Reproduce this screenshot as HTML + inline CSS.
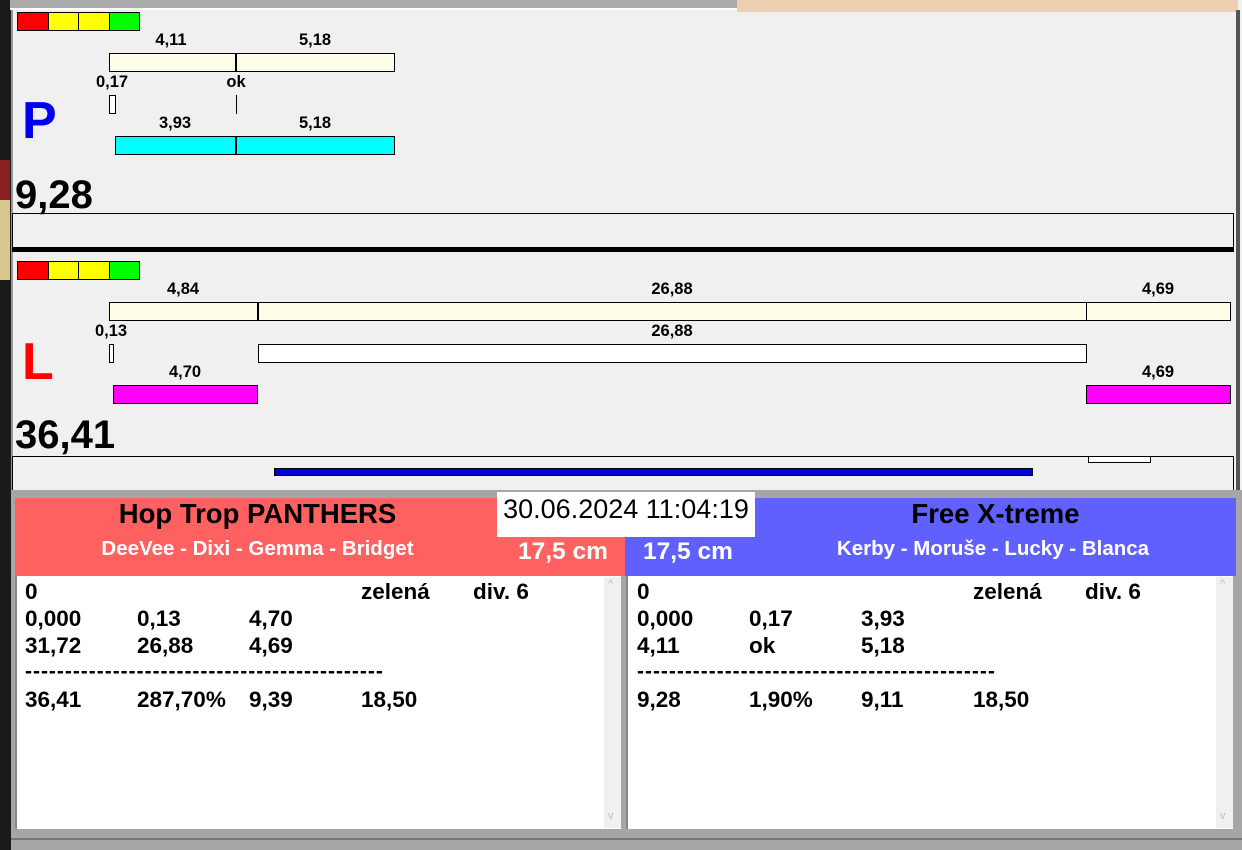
<!DOCTYPE html>
<html><head><meta charset="utf-8"><style>
*{margin:0;padding:0;box-sizing:border-box}
body{width:1242px;height:850px;position:relative;overflow:hidden;background:#f0f0f0;font-family:"Liberation Sans",Arial,sans-serif;}
.a{position:absolute}
.t{position:absolute;font-weight:bold;font-size:16.5px;color:#000;transform:translateX(-50%);white-space:nowrap;line-height:17px}
.bx{position:absolute;border:1px solid #000}
.row{position:absolute;font-weight:bold;font-size:22.5px;line-height:24px;white-space:nowrap}
.row span{position:absolute}
</style></head><body>
<div class="a" style="left:0;top:0;width:11px;height:850px;background:#1a1a1a"></div>
<div class="a" style="left:0;top:200px;width:10px;height:80px;background:#d8c890"></div>
<div class="a" style="left:0;top:160px;width:10px;height:40px;background:#8a2020"></div>
<div class="a" style="left:10px;top:0;width:727px;height:10px;background:#ababab"></div>
<div class="a" style="left:737px;top:0;width:501px;height:12px;background:#efcfb2"></div>
<div class="a" style="left:10px;top:8px;width:727px;height:2px;background:#fff"></div>
<div class="a" style="left:11px;top:10px;width:2px;height:480px;background:#999"></div>
<div class="a" style="left:1236px;top:10px;width:4px;height:482px;background:#555"></div>

<!-- P section -->
<div class="a" style="left:17px;top:12px;width:123px;height:19px;border:1px solid #000;display:flex">
<div style="flex:1;background:#f00;border-right:1px solid #000"></div><div style="flex:1;background:#ff0;border-right:1px solid #000"></div><div style="flex:1;background:#ff0;border-right:1px solid #000"></div><div style="flex:1;background:#0f0"></div></div>
<div class="t" style="left:171px;top:32px">4,11</div>
<div class="t" style="left:315px;top:32px">5,18</div>
<div class="bx" style="left:109px;top:53px;width:286px;height:19px;background:#fefee8"></div>
<div class="a" style="left:235px;top:53px;width:2px;height:19px;background:#000"></div>
<div class="t" style="left:112px;top:74px">0,17</div>
<div class="t" style="left:236px;top:74px">ok</div>
<div class="bx" style="left:109px;top:95px;width:7px;height:19px;background:#fff"></div>
<div class="a" style="left:236px;top:95px;width:1px;height:19px;background:#000"></div>
<div class="t" style="left:175px;top:115px">3,93</div>
<div class="t" style="left:315px;top:115px">5,18</div>
<div class="bx" style="left:115px;top:136px;width:280px;height:19px;background:#0ff"></div>
<div class="a" style="left:235px;top:136px;width:2px;height:19px;background:#000"></div>
<div class="a" style="left:22px;top:92px;font-size:52px;font-weight:bold;color:#0000ee;line-height:58px">P</div>
<div class="a" style="left:15px;top:172px;font-size:40px;font-weight:bold;line-height:46px">9,28</div>
<div class="a" style="left:12px;top:213px;width:1222px;height:36px;border:1px solid #000;border-bottom:none"></div>
<div class="a" style="left:12px;top:247px;width:1222px;height:5px;background:#000"></div>

<!-- L section -->
<div class="a" style="left:17px;top:261px;width:123px;height:19px;border:1px solid #000;display:flex">
<div style="flex:1;background:#f00;border-right:1px solid #000"></div><div style="flex:1;background:#ff0;border-right:1px solid #000"></div><div style="flex:1;background:#ff0;border-right:1px solid #000"></div><div style="flex:1;background:#0f0"></div></div>
<div class="t" style="left:183px;top:281px">4,84</div>
<div class="t" style="left:672px;top:281px">26,88</div>
<div class="t" style="left:1158px;top:281px">4,69</div>
<div class="bx" style="left:109px;top:302px;width:1122px;height:19px;background:#fefee8"></div>
<div class="a" style="left:257px;top:302px;width:2px;height:19px;background:#000"></div>
<div class="a" style="left:1086px;top:302px;width:1px;height:19px;background:#000"></div>
<div class="t" style="left:111px;top:323px">0,13</div>
<div class="t" style="left:672px;top:323px">26,88</div>
<div class="bx" style="left:109px;top:344px;width:5px;height:19px;background:#fff"></div>
<div class="bx" style="left:258px;top:344px;width:829px;height:19px;background:#fff"></div>
<div class="t" style="left:185px;top:364px">4,70</div>
<div class="t" style="left:1158px;top:364px">4,69</div>
<div class="bx" style="left:113px;top:385px;width:145px;height:19px;background:#f0f"></div>
<div class="bx" style="left:1086px;top:385px;width:145px;height:19px;background:#f0f"></div>
<div class="a" style="left:22px;top:333px;font-size:52px;font-weight:bold;color:#f00;line-height:58px">L</div>
<div class="a" style="left:15px;top:412px;font-size:40px;font-weight:bold;line-height:46px">36,41</div>
<div class="a" style="left:12px;top:456px;width:1222px;height:36px;border:1px solid #000;border-bottom:none"></div>
<div class="bx" style="left:274px;top:468px;width:759px;height:8px;background:#0000dd"></div>
<div class="bx" style="left:1088px;top:456px;width:63px;height:7px;background:#fff"></div>

<!-- bottom -->
<div class="a" style="left:11px;top:490px;width:1231px;height:360px;background:#a6a6a6"></div>
<div class="a" style="left:15px;top:498px;width:610px;height:78px;background:#ff6060"></div>
<div class="a" style="left:625px;top:498px;width:611px;height:78px;background:#6060ff"></div>
<div class="a" style="left:15px;top:497px;width:485px;text-align:center;font-size:27.5px;font-weight:bold;line-height:34px">Hop Trop PANTHERS</div>
<div class="a" style="left:15px;top:537px;width:485px;text-align:center;font-size:20.5px;font-weight:bold;color:#fff;line-height:24px">DeeVee - Dixi - Gemma - Bridget</div>
<div class="a" style="left:518px;top:538px;font-size:24.5px;font-weight:bold;color:#fff;line-height:28px">17,5 cm</div>
<div class="a" style="left:497px;top:492px;width:258px;height:45px;background:#fff;font-size:27px;line-height:34px;text-align:center">30.06.2024 11:04:19</div>
<div class="a" style="left:755px;top:497px;width:481px;text-align:center;font-size:27.5px;font-weight:bold;line-height:34px">Free X-treme</div>
<div class="a" style="left:755px;top:537px;width:476px;text-align:center;font-size:20.5px;font-weight:bold;color:#fff;line-height:24px">Kerby - Moruše - Lucky - Blanca</div>
<div class="a" style="left:643px;top:538px;font-size:24.5px;font-weight:bold;color:#fff;line-height:28px">17,5 cm</div>

<div class="a" style="left:15px;top:576px;width:606px;height:253px;background:#fff;border-left:2px solid #888"></div>
<div class="a" style="left:604px;top:577px;width:17px;height:251px;background:#f0f0f0"></div>
<div class="a" style="left:626px;top:576px;width:607px;height:253px;background:#fff;border-left:2px solid #888"></div>
<div class="a" style="left:1216px;top:577px;width:17px;height:251px;background:#f0f0f0"></div>
<div class="a" style="left:608px;top:578px;color:#bbb;font-size:11px">^</div>
<div class="a" style="left:608px;top:810px;color:#bbb;font-size:11px">v</div>
<div class="a" style="left:1220px;top:578px;color:#bbb;font-size:11px">^</div>
<div class="a" style="left:1220px;top:810px;color:#bbb;font-size:11px">v</div>

<div class="row" style="left:25px;top:580px"><span style="left:0">0</span><span style="left:336px">zelená</span><span style="left:448px">div. 6</span></div>
<div class="row" style="left:25px;top:607px"><span style="left:0">0,000</span><span style="left:112px">0,13</span><span style="left:224px">4,70</span></div>
<div class="row" style="left:25px;top:634px"><span style="left:0">31,72</span><span style="left:112px">26,88</span><span style="left:224px">4,69</span></div>
<div class="row" style="left:25px;top:660px"><span style="left:0;font-size:21px;letter-spacing:0.98px">---------------------------------------------</span></div>
<div class="row" style="left:25px;top:688px"><span style="left:0">36,41</span><span style="left:112px">287,70%</span><span style="left:224px">9,39</span><span style="left:336px">18,50</span></div>

<div class="row" style="left:637px;top:580px"><span style="left:0">0</span><span style="left:336px">zelená</span><span style="left:448px">div. 6</span></div>
<div class="row" style="left:637px;top:607px"><span style="left:0">0,000</span><span style="left:112px">0,17</span><span style="left:224px">3,93</span></div>
<div class="row" style="left:637px;top:634px"><span style="left:0">4,11</span><span style="left:112px">ok</span><span style="left:224px">5,18</span></div>
<div class="row" style="left:637px;top:660px"><span style="left:0;font-size:21px;letter-spacing:0.98px">---------------------------------------------</span></div>
<div class="row" style="left:637px;top:688px"><span style="left:0">9,28</span><span style="left:112px">1,90%</span><span style="left:224px">9,11</span><span style="left:336px">18,50</span></div>
<div class="a" style="left:11px;top:838px;width:1231px;height:2px;background:#777"></div>
</body></html>
